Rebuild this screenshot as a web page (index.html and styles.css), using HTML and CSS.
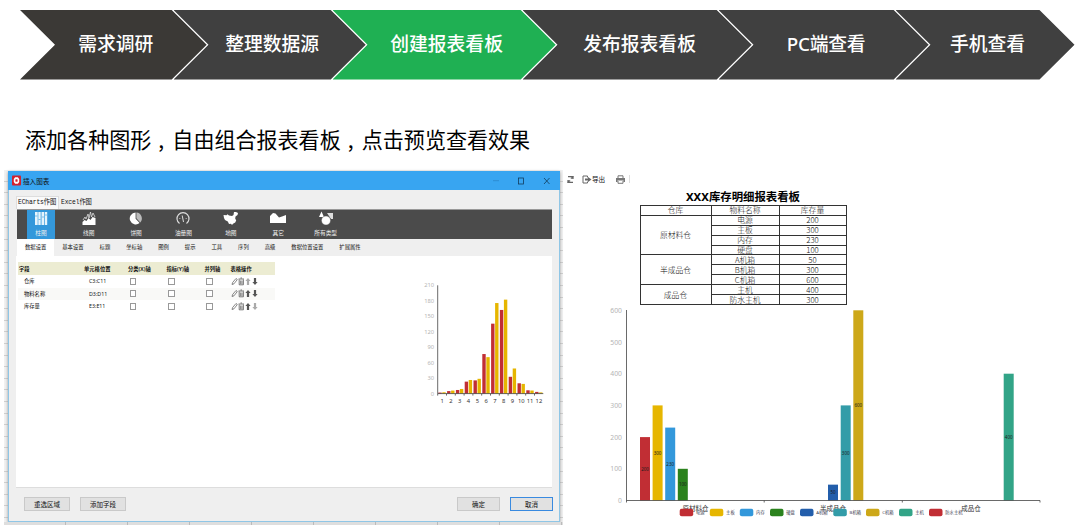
FILE: index.html
```html
<!DOCTYPE html>
<html lang="zh">
<head>
<meta charset="utf-8">
<title>报表看板</title>
<link rel="stylesheet" href="styles.css">
</head>
<body>
<nav class="steps">
  <div class="step s1">需求调研</div>
  <div class="step s2">整理数据源</div>
  <div class="step s3 current">创建报表看板</div>
  <div class="step s4">发布报表看板</div>
  <div class="step s5">PC端查看</div>
  <div class="step s6">手机查看</div>
</nav>
<h1 class="headline">添加各种图形<span class="comma">,</span>自由组合报表看板<span class="comma">,</span>点击预览查看效果</h1>
<main class="content">
  <section class="sheet">
    <div class="dialog">
      <header class="titlebar">
        <svg class="app-icon" viewBox="0 0 10 11"><rect width="10" height="11" rx="1" fill="#d3202c"/><path d="M3.500 2h3L8 3.800v3.400L6.500 9h-3L2 7.200V3.800z" fill="#fff"/><rect x="3.800" y="4" width="2.400" height="3" rx=".6" fill="#d3202c"/></svg>
        <span class="title">插入图表</span>
        <svg class="win-buttons" viewBox="0 0 60 10" fill="none" stroke="#123c5c" stroke-width=".8"><path d="M2 4.700h6" stroke="#2b87c9"/><rect x="27.500" y="2" width="5" height="6"/><path d="M53 2l5.500 6M58.500 2L53 8"/></svg>
      </header>
      <div class="modes"><span class="mode on">ECharts作图</span><span class="mode">Excel作图</span></div>
      <div class="types">
        <div class="type on"><svg viewBox="0 0 16 15"><path d="M2 1h2.700v13H2zM5.300 1H7.700v13H5.300zM8.500 1h2.500v13H8.500zM11.700 1h2.500v13h-2.500z" fill="#e6f4fc"/><path d="M2 5h2.700M5.300 8.500h2.400M8.500 6H11M11.700 4h2.500" stroke="#7fbfe8" stroke-width="1"/></svg><span>柱图</span></div>
        <div class="type"><svg viewBox="0 0 16 15"><path d="M1.500 14v-3l2-2 2 1 2-3 2 2 2-3 3 1v7z" fill="#fff"/><path d="M2 9l2-3 1 2 2-5 1 4 1.500-6 1 5 1.500-4 2 4" fill="none" stroke="#ddd" stroke-width=".8"/></svg><span>线图</span></div>
        <div class="type"><svg viewBox="0 0 16 15"><path d="M7.600 1.500a6 6 0 1 0 4 10.600L7.600 7.700z" fill="#fff"/><path d="M8.400 1.400a6 6 0 0 1 3.900 10L8.400 7.300z" fill="#bbb"/></svg><span>饼图</span></div>
        <div class="type"><svg viewBox="0 0 16 15" fill="none"><path d="M4.500 12.500A6 6 0 1 1 11.500 12.500" stroke="#ddd" stroke-width="1.200"/><path d="M7.200 4.500L8.500 11" stroke="#ddd"/><path d="M4 7.500h1.500M10.500 7.500H12" stroke="#999"/></svg><span>油量图</span></div>
        <div class="type"><svg viewBox="0 0 16 15"><path d="M.5 4l3 .2 1-1 1.500 1.200 3 .5 1.500-1 .5-3L13 1l2 1-.5 2-2 1.500-.3 2 1 2-1 2-2.200 1.300-1 1.200-1-1.300-2 .3-1.200-2.500L2 9 1 7z" fill="#fff"/></svg><span>地图</span></div>
        <div class="type"><svg viewBox="0 0 16 15"><path d="M0 12V5l3-3 2.500.5L9 6.500l3-1L16 4v8z" fill="#fff"/></svg><span>其它</span></div>
        <div class="type"><svg viewBox="0 0 16 15"><path d="M3.500.5L6 6H1z" fill="#fff"/><path d="M9 2h6v6h-2" fill="#ddd"/><circle cx="8" cy="9.500" r="4.600" fill="#fff" stroke="#4b4b4b" stroke-width=".5"/></svg><span>所有类型</span></div>
      </div>
      <div class="subtabs"><span class="on">数据设置</span><span>基本设置</span><span>标题</span><span>坐标轴</span><span>图例</span><span>提示</span><span>工具</span><span>序列</span><span>高级</span><span>数据位置设置</span><span>扩展属性</span></div>
      <div class="panel">
        <div class="fields">
          <div class="row head"><span>字段</span><span>单元格位置</span><span>分类(X)轴</span><span>指标(Y)轴</span><span>并列轴</span><span>表格操作</span></div>
          <div class="row"><span>仓库</span><span>C3:C11</span><i></i><i></i><i></i>
            <svg class="ops" viewBox="0 0 28 9"><use href="#edit"/><use href="#up" opacity=".5"/><use href="#down"/></svg></div>
          <div class="row alt"><span>物料名称</span><span>D3:D11</span><i></i><i></i><i></i>
            <svg class="ops" viewBox="0 0 28 9"><use href="#edit"/><use href="#up"/><use href="#down"/></svg></div>
          <div class="row"><span>库存量</span><span>E3:E11</span><i></i><i></i><i></i>
            <svg class="ops" viewBox="0 0 28 9"><use href="#edit"/><use href="#up"/><use href="#down" opacity=".5"/></svg></div>
        </div>
        <svg class="defs" width="0" height="0"><defs>
          <g id="edit"><path d="M1 7.500l.6-2L5 1.500l1.300 1L3 6.800z" fill="none" stroke="#555" stroke-width=".7"/><path d="M7.500 2h5.500M9.500 1h1.500M8.200 2.500v5.300h4.200V2.500M9.700 3.500v3.500M11 3.500v3.500" fill="none" stroke="#555" stroke-width=".8"/></g>
          <path id="up" d="M17 1l2.600 3h-1.500v4h-2.200V4h-1.500z" fill="#555"/>
          <path id="down" d="M24 8l2.600-3h-1.500V1h-2.200v4h-1.500z" fill="#555"/>
        </defs></svg>
        <svg class="mini" id="mini" viewBox="0 0 130 130"></svg>
      </div>
      <footer class="actions"><button>重选区域</button><button>添加字段</button><span class="grow"></span><button class="short">确定</button><button class="short primary">取消</button></footer>
    </div>
    <div class="cells"></div>
  </section>
  <section class="report">
    <div class="tools">
      <svg width="9" height="9" viewBox="0 0 9 9" fill="none" stroke="#666" stroke-width="1.300"><path d="M2 1.700h4.500v2M4.800 3.200h3M7 7.300H2.500v-2M1.200 5.800h3"/><path d="M6.500 3.500L7.500 1M2.500 5.500L1.500 8" stroke-width=".9"/></svg>
      <svg class="out" width="10" height="9" viewBox="0 0 10 9"><path d="M5.500 1H1v7h4.500M5.500 1v1.500M5.500 6.500V8" fill="none" stroke="#666"/><path d="M3 3.600h3V2l3.500 2.500L6 7V5.400H3z" fill="#666"/></svg>
      <span>导出</span>
      <svg class="print" width="9" height="9" viewBox="0 0 9 9"><path d="M2 3V.8h5V3M2 6v2.300h5V6" fill="none" stroke="#777"/><path d="M0 3h9v4H7.500V5.500h-6V7H0z" fill="#777"/></svg>
      <b class="bar"></b>
    </div>
    <h2>XXX库存明细报表看板</h2>
    <table class="stock">
      <tr><td class="c1">仓库</td><td class="c2">物料名称</td><td>库存量</td></tr>
      <tr><td rowspan="4">原材料仓</td><td>电源</td><td>200</td></tr>
      <tr><td>主板</td><td>300</td></tr>
      <tr><td>内存</td><td>230</td></tr>
      <tr><td>硬盘</td><td>100</td></tr>
      <tr><td rowspan="3">半成品仓</td><td>A机箱</td><td>50</td></tr>
      <tr><td>B机箱</td><td>300</td></tr>
      <tr><td>C机箱</td><td>600</td></tr>
      <tr><td rowspan="2">成品仓</td><td>主机</td><td>400</td></tr>
      <tr><td>防水主机</td><td>300</td></tr>
    </table>
    <svg class="chart" id="chart" viewBox="600 304 460 221"></svg>
  </section>
</main>
<script src="charts.js"></script>
</body>
</html>
```
FILE: styles.css
```css
* { box-sizing: border-box; }
body { margin: 0; width: 1080px; height: 525px; overflow: hidden; background: #fff; color: #111; font-family: "Noto Sans CJK SC", "Noto Sans", sans-serif; }
.steps { display: flex; height: 80px; padding: 10px 0 0 20px; }
.step { flex: none; height: 69.500px; padding: 0 0 4px 5px; margin-right: -33.200px; display: flex; align-items: center; justify-content: center; background: #404040; color: #fff; font-family: "Noto Sans", "Noto Sans CJK SC", sans-serif; font-size: 18.800px; font-weight: 500; white-space: nowrap; clip-path: polygon(0 0, calc(100% - 35px) 0, 100% 50%, calc(100% - 35px) 100%, 0 100%, 35px 50%); }
.s1 { width: 186.700px; background: #3b3936; }
.s2 { width: 192.200px; }
.s3 { width: 223.200px; }
.s4 { width: 229.200px; }
.s5 { width: 210.200px; letter-spacing: -.2px; }
.s6 { width: 179px; }
.step.current { background: #1fb053; }
.headline { margin: 0; height: 90px; padding: 43px 0 0 25px; font-size: 21.050px; line-height: 32px; font-weight: 400; color: #000; white-space: nowrap; }
.comma { display: inline-block; width: 21.050px; padding-left: 7px; }
.content { display: flex; height: 355px; }

.sheet { flex: none; margin-left: 4px; width: 559px; padding: 1px 0 0 4px; background: repeating-linear-gradient(#f2f2f2 0 10.600px, #cfcfcf 10.600px 11.600px); }
.dialog { width: 552px; height: 351px; display: flex; flex-direction: column; background: #efefef; border: 1px solid #8fc6e6; border-top: 0; box-shadow: 0 1px 3px #999; }
.cells { height: 4px; margin-left: -4px; background: repeating-linear-gradient(90deg, #dedede 0 61px, #bbb 61px 62px); }
.titlebar { height: 19px; flex: none; display: flex; align-items: center; margin: 0 -1px; padding: 0 9.500px 0 4px; background: #38a5f1; }
.app-icon { width: 9px; height: 11px; flex: none; }
.title { margin-left: 2px; font-size: 6.600px; line-height: 10px; flex: 1; }
.win-buttons { width: 60px; height: 10px; flex: none; }
.modes { height: 19px; flex: none; display: flex; align-items: flex-end; padding-left: 7px; font-family: "Liberation Mono", "Noto Sans CJK SC", monospace; font-size: 6.300px; }
.mode { height: 13px; line-height: 13px; padding: 0 2px; letter-spacing: -.1px; white-space: nowrap; }
.mode.on { background: #fafafa; width: 43px; padding: 0 1px; border: 1px solid #ddd; border-width: 1px 1px 0; line-height: 12px; }
.types { height: 30px; flex: none; margin: 0 7px 0 8px; padding-left: 8px; display: flex; background: #4b4b4b; border-top: 1px solid #999; }
.type { width: 47.400px; display: flex; flex-direction: column; align-items: center; color: #eee; font-size: 5.700px; line-height: 8px; padding-top: 1px; }
.type svg { width: 16px; height: 15px; margin-bottom: 3px; }
.type.on { width: 28px; margin: 0 10px 0 2px; background: #3498db; }
.subtabs { height: 17px; flex: none; display: flex; margin-left: 8px; font-size: 5.350px; line-height: 17px; white-space: nowrap; }
.subtabs span { padding: 0 7.980px; }
.subtabs .on { background: #fff; }
.panel { flex: 1; display: flex; justify-content: space-between; margin: 0 7px; padding: 6px 0 0 2px; background: #fff; border-bottom: 1px solid #ddd; }
.fields { width: 257px; font-family: "Noto Sans", "Noto Sans CJK SC", sans-serif; font-size: 5.300px; }
.row { display: grid; grid-template-columns: 65px 44px 38.500px 38px 26px 1fr; height: 12.500px; align-items: center; line-height: 12px; white-space: nowrap; padding-left: 1px; }
.row.head { height: 13px; background: #ececd2; font-weight: 600; }
.row.alt { background: #f9f9f7; }
.row:not(.head) span { padding-left: 5px; }
.row i { width: 6.500px; height: 7px; margin-left: 1.500px; border: 1px solid #999; background: #fff; }
.ops { width: 28px; height: 9px; }
.defs { position: absolute; }
.mini { width: 130px; height: 130px; margin-top: 14px; flex: none; }
.actions { height: 33px; flex: none; display: flex; align-items: flex-start; padding: 9px 6px 0 15px; }
.actions button { width: 46px; height: 14px; margin: 0 10px 0 0; padding: 0; font: 6.500px/11px "Noto Sans CJK SC", sans-serif; color: #111; border: 1px solid #c9c9c9; background: #e1e1e1; }
.actions .short { width: 43px; }
.actions .primary { margin-right: 0; border: 1.500px solid #398ae0; }
.grow { flex: 1; }

.report { flex: 1; display: flex; flex-direction: column; }
.tools { display: flex; align-items: center; height: 18px; padding-left: 3px; font-size: 6.600px; line-height: 10px; }
.out { margin: 0 0 0 7px; }
.print { margin-left: 11px; }
.bar { width: 1px; height: 8px; margin-left: 4px; background: #ddd; }
.report h2 { margin: 0 0 0 77px; width: 206px; height: 17px; text-align: center; font-family: "Noto Sans", "Noto Sans CJK SC", sans-serif; font-size: 11.400px; line-height: 18px; font-weight: 700; color: #000; }
.stock { width: 207px; height: 100px; margin-left: 76.500px; border-collapse: collapse; table-layout: fixed; font-size: 7.800px; font-weight: 300; }
.stock tr { height: 9.900px; }
.stock td { height: 9.900px; padding: 0; border: 1px solid #333; text-align: center; line-height: 7.900px; }
.c1 { width: 71px; }
.c2 { width: 68px; }
.chart { width: 460px; height: 221px; margin-left: 37px; margin-top: -1px; flex: none; font-family: "Noto Sans", "Noto Sans CJK SC", sans-serif; }
.mini { font-family: "Noto Sans", "Noto Sans CJK SC", sans-serif; }
.axis { stroke: #444; stroke-width: .8; }
.tick { fill: #b5b5b5; text-anchor: end; }
.cat { fill: #333; text-anchor: middle; }
.value { fill: #1c1c1c; text-anchor: middle; font-size: 4.500px; }
.legend { fill: #445; font-size: 4.300px; }
```
FILE: charts.js
```javascript
function bar(x, y, w, h, color) {
  return `<rect x="${x}" y="${y}" width="${w}" height="${h}" fill="${color}"/>`;
}
function line(x1, y1, x2, y2) {
  return `<line class="axis" x1="${x1}" y1="${y1}" x2="${x2}" y2="${y2}"/>`;
}
function text(cls, x, y, value, size) {
  return `<text class="${cls}" x="${x}" y="${y}"${size ? ` font-size="${size}"` : ''}>${value}</text>`;
}

// Monthly preview chart in the dialog
(function () {
  const a = [2, 4.9, 7, 23.2, 25.6, 76.7, 135.6, 162.2, 32.6, 20, 6.4, 3.3];
  const b = [2.6, 5.9, 9, 26.4, 28.7, 70.7, 175.6, 182.2, 48.7, 18.8, 6, 2.3];
  const left = 15.7, base = 117.6, pitch = 8.8, k = 108.3 / 210;
  let s = '';
  a.forEach((v, i) => {
    const x = left + pitch * i;
    s += bar(x + 0.6, base - v * k, 3.4, v * k, '#c12e34');
    s += bar(x + 4.6, base - b[i] * k, 3.4, b[i] * k, '#e6b600');
    s += line(x, base, x, base + 2);
    s += text('cat', x + 4.4, base + 9.3, i + 1, 5.8);
  });
  for (let v = 0; v <= 210; v += 30) s += text('tick', left - 3.5, base - v * k + 2, v, 5.8);
  s += line(left, 9.3, left, base) + line(left, base, left + pitch * 12, base);
  document.getElementById('mini').innerHTML = s;
})();

// Stock chart
(function () {
  const base = 500.5, k = 190.2 / 600;
  const bars = [
    [640, 200, '#c12e34'], [652.6, 300, '#e6b600'], [665.2, 230, '#3398db'], [677.8, 100, '#2b821d'],
    [828, 50, '#235eab'], [840.7, 300, '#339ca8'], [853.3, 600, '#cda819'], [1003.7, 400, '#32a487']
  ];
  const legend = [
    [679.7, '电源', '#c12e34'], [709.8, '主板', '#e6b600'], [739.8, '内存', '#3398db'], [770, '硬盘', '#2b821d'],
    [800, 'A机箱', '#235eab'], [833.3, 'B机箱', '#339ca8'], [866, 'C机箱', '#cda819'], [899, '主机', '#32a487'],
    [929, '防水主机', '#c12e34']
  ];
  let s = '';
  bars.forEach(([x, v, c]) => {
    s += bar(x, base - v * k, 10, v * k, c) + text('value', x + 5, base - v * k / 2 + 1.8, v);
  });
  for (let v = 0; v <= 600; v += 100) s += text('tick', 622, base - v * k + 2.5, v, 6.8);
  s += line(626.5, 310, 626.5, base + 2) + line(626.5, base, 1040, base);
  [764.2, 902.3, 1040].forEach(x => { s += line(x, base, x, base + 2); });
  [[695.5, '原材料仓'], [833, '半成品仓'], [971, '成品仓']].forEach(([x, t]) => { s += text('cat', x, 510.5, t, 6.5); });
  legend.forEach(([x, t, c]) => {
    s += `<rect x="${x}" y="508.800" width="13.500" height="7.500" rx="2" fill="${c}"/>` + text('legend', x + 16.3, 514.3, t);
  });
  document.getElementById('chart').innerHTML = s;
})();
```
